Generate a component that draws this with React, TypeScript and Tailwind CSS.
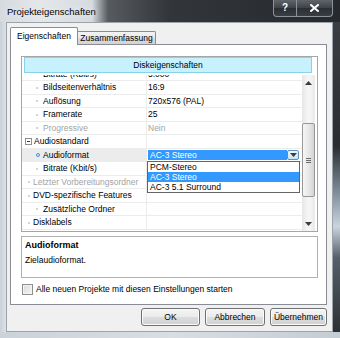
import React from 'react';

type PropRow = {
  label: string;
  value?: string;
  level: 1 | 2;
  category?: boolean;
  disabled?: boolean;
  selected?: boolean;
};

// first row is scrolled half out of view, as in the dialog
const rows: PropRow[] = [
  { label: 'Bitrate (Kbit/s)', value: '5.000', level: 2 },
  { label: 'Bildseitenverhältnis', value: '16:9', level: 2 },
  { label: 'Auflösung', value: '720x576 (PAL)', level: 2 },
  { label: 'Framerate', value: '25', level: 2 },
  { label: 'Progressive', value: 'Nein', level: 2, disabled: true },
  { label: 'Audiostandard', level: 1, category: true },
  { label: 'Audioformat', level: 2, selected: true },
  { label: 'Bitrate (Kbit/s)', level: 2 },
  { label: 'Letzter Vorbereitungsordner', level: 1, disabled: true },
  { label: 'DVD-spezifische Features', level: 1 },
  { label: 'Zusätzliche Ordner', level: 2 },
  { label: 'Disklabels', level: 1 },
];

const audioOptions = ['PCM-Stereo', 'AC-3 Stereo', 'AC-3 5.1 Surround'];

function Arrow({ down }: { down?: boolean }) {
  return (
    <svg width="7" height="4" viewBox="0 0 7 4">
      <path d={down ? 'M0 0h7L3.5 4z' : 'M0 4h7L3.5 0z'} fill="#3b3b3b" />
    </svg>
  );
}

function AudioCombo() {
  return (
    <div className="relative flex-1 self-stretch mr-[2px]">
      <div className="flex h-full bg-white p-px">
        <div className="flex-1 flex items-center pl-[2px] bg-[#3399ff] text-white whitespace-nowrap">AC-3 Stereo</div>
        <div className="w-[12px] flex items-center justify-center border border-[#5b8fc0] rounded-[2px] bg-[linear-gradient(to_bottom,#eef7fd,#c6e5f7)]">
          <Arrow down />
        </div>
      </div>
      {/* open drop-down list */}
      <div className="absolute left-0 right-0 top-full z-10 border border-[#646464] bg-white">
        {audioOptions.map((o, i) => (
          <div
            key={o}
            className={`h-[10px] flex items-center pl-[2px] whitespace-nowrap ${i === 1 ? 'bg-[#3399ff] text-white' : 'text-black'}`}
          >
            {o}
          </div>
        ))}
      </div>
    </div>
  );
}

function GridRow({ row }: { row: PropRow }) {
  const txt = row.disabled ? 'text-[#a3a3a3]' : 'text-black';
  return (
    <div className="flex h-[13.5px] border-b border-[#ececec]">
      <div
        className={`w-[125px] shrink-0 flex items-center border-r border-[#ececec] ${row.selected ? 'bg-[#ececec]' : ''}`}
      >
        {row.category ? (
          <>
            <span className="ml-[3px] w-[7px] h-[7px] border border-[#8f8f8f] bg-white flex items-center justify-center">
              <span className="w-[3px] h-px bg-[#333]" />
            </span>
            <span className={`ml-[2px] ${txt}`}>{row.label}</span>
          </>
        ) : row.selected ? (
          <>
            <span className="ml-[14px] w-[4px] h-[4px] rounded-full border border-[#3f8fdc]" />
            <span className={`ml-[3px] ${txt}`}>{row.label}</span>
          </>
        ) : (
          <>
            <span className={`${row.level === 2 ? 'ml-[14px] mr-[5px]' : 'ml-[6px] mr-[3px]'} w-[2px] h-[2px] bg-[#d4d4d4]`} />
            <span className={`whitespace-nowrap ${txt}`}>{row.label}</span>
          </>
        )}
      </div>
      <div className={`flex-1 min-w-0 flex items-center ${row.selected ? '' : 'pl-px'} ${txt}`}>
        {row.selected ? <AudioCombo /> : row.value}
      </div>
    </div>
  );
}

function Scrollbar() {
  return (
    <div className="w-[13px] mr-[2px] flex flex-col bg-[linear-gradient(to_right,#e6e6e6,#f5f5f5_45%,#f5f5f5_60%,#e9e9e9)]">
      <div className="h-[15px] flex items-center justify-center">
        <Arrow />
      </div>
      <div className="flex-1 pt-[33px]">
        <div className="h-[74px] rounded-[2px] border border-[#989898] bg-[linear-gradient(to_right,#f6f6f6,#e6e6e6_55%,#d4d4d4)] flex flex-col items-center justify-center gap-px">
          <span className="w-[5px] h-px bg-[#6b6b6b]" />
          <span className="w-[5px] h-px bg-[#6b6b6b]" />
          <span className="w-[5px] h-px bg-[#6b6b6b]" />
        </div>
      </div>
      <div className="h-[15px] flex items-center justify-center">
        <Arrow down />
      </div>
    </div>
  );
}

function DialogButton({ label, width }: { label: string; width: string }) {
  return (
    <button
      className={`${width} h-[18px] rounded-[3px] border border-[#707070] bg-[linear-gradient(to_bottom,#f4f4f4,#ebebeb_50%,#dddddd_50%,#d0d0d0)] shadow-[inset_0_0_0_1px_#fbfbfb] text-black flex items-center justify-center`}
    >
      {label}
    </button>
  );
}

export default function App() {
  return (
    <div className="w-[340px] h-[338px] flex flex-col overflow-hidden bg-[#d3d9df] font-['Liberation_Sans',Arial,sans-serif] text-[8.5px] leading-none">
      {/* title bar */}
      <div className="h-[22px] flex items-start pr-[7px] bg-[linear-gradient(to_right,#d5dadf_0px,#e4e7ea_40px,#d6dbe0_92px,#575b60_108px,#32363a_170px,#26292d_100%)]">
        <div className="h-[22px] pl-[7px] pt-px flex items-center text-[9.5px] text-black [text-shadow:0_0_6px_#fff]">
          Projekteigenschaften
        </div>
        <div className="ml-auto flex">
          <div className="w-[24px] h-[17px] border border-t-0 border-[#8d9298] rounded-bl-[4px] bg-[linear-gradient(to_bottom,#60656b,#3e4247_50%,#2b2e32_51%,#3a3e43)] flex items-center justify-center text-white font-bold text-[10px]">
            ?
          </div>
          <div className="w-[36px] h-[17px] border border-t-0 border-l-0 border-[#8d9298] rounded-br-[4px] bg-[linear-gradient(to_bottom,#60656b,#3e4247_50%,#2b2e32_51%,#3a3e43)] flex items-center justify-center">
            <svg width="9" height="8" viewBox="0 0 9 8">
              <path d="M1 1l7 6M8 1L1 7" stroke="#fff" strokeWidth="2" strokeLinecap="square" />
            </svg>
          </div>
        </div>
      </div>

      <div className="flex h-[310px]">
        {/* left frame */}
        <div className="w-[6px] bg-[linear-gradient(to_right,#c9d0d7,#dde2e7)]" />

        {/* client area */}
        <div className="w-[327px] h-[310px] border border-[#9ba3ab] bg-[#f0f0f0] pt-[4px] pl-[3px] pr-[5px] pb-[5px] flex flex-col">
          {/* tabs */}
          <div className="h-[17px] flex items-end">
            <div className="relative z-10 -mb-px w-[68px] h-[18px] bg-white border border-b-0 border-[#898c95] rounded-t-[2px] flex items-center justify-center text-black">
              Eigenschaften
            </div>
            <div className="w-[78px] h-[13px] border border-b-0 border-l-0 border-[#898c95] rounded-tr-[2px] bg-[linear-gradient(to_bottom,#f3f3f3,#e9e9e9_50%,#dbdbdb_51%,#d3d3d3)] flex items-center justify-center pt-px text-black">
              Zusammenfassung
            </div>
          </div>

          {/* tab panel */}
          <div className="h-[261px] border border-[#898c95] bg-white pt-[11px] pl-[10px] pr-[8px] flex flex-col">
            {/* property grid */}
            <div className="h-[176px] border border-[#a6a6a6] flex flex-col">
              <div className="h-[16px] ml-[2px] mr-[5px] border border-[#86d3ea] bg-[#c7f1fc] flex items-center justify-center text-black">
                Diskeigenschaften
              </div>
              <div className="mt-[2px] h-[156px] flex">
                <div className="flex-1 overflow-hidden">
                  <div className="-mt-[7.25px]">
                    {rows.map((r, i) => (
                      <GridRow key={i} row={r} />
                    ))}
                  </div>
                </div>
                <Scrollbar />
              </div>
            </div>

            {/* description */}
            <div className="mt-[4px] h-[42px] border border-[#b1b1b1] bg-white pl-[3px] pt-[4px] flex flex-col gap-[6px]">
              <div className="font-bold text-black text-[9px]">Audioformat</div>
              <div className="text-black">Zielaudioformat.</div>
            </div>

            {/* checkbox */}
            <div className="mt-[6px] h-[11px] flex items-center">
              <span className="ml-px w-[11px] h-[11px] border border-[#8e8f8f] bg-[linear-gradient(135deg,#d9d9d9,#f7f7f7)] shadow-[inset_0_0_0_1px_#f4f4f4]" />
              <span className="ml-[3px] text-black">Alle neuen Projekte mit diesen Einstellungen starten</span>
            </div>
          </div>

          {/* buttons */}
          <div className="mt-[3px] h-[18px] flex justify-end gap-[5px]">
            <DialogButton label="OK" width="w-[59px]" />
            <DialogButton label="Abbrechen" width="w-[60px]" />
            <DialogButton label="Übernehmen" width="w-[57px]" />
          </div>
        </div>

        {/* right frame (dark glass) */}
        <div className="flex-1 bg-[linear-gradient(to_bottom,#3a3e42,#2a2d31_40%,#7f8d9a_55%,#c9d4de_66%,#55606b_76%,#2c3034_100%)]" />
      </div>

      {/* bottom frame */}
      <div className="flex-1 bg-[linear-gradient(to_right,#cbd2d9,#d9dee3_50%,#c4ccd4)]" />
    </div>
  );
}
